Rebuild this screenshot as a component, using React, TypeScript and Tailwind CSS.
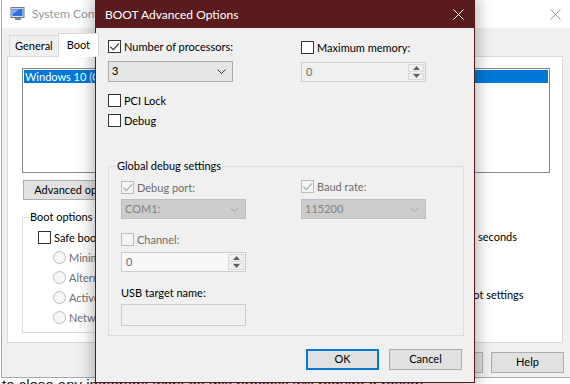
import clsx from 'clsx'

// ---- small win10-style controls ----

function CheckBox({ checked = false, disabled = false }: { checked?: boolean; disabled?: boolean }) {
  return (
    <span
      className={clsx(
        'flex h-[13px] w-[13px] shrink-0 items-center justify-center border',
        disabled ? 'border-[#bcbcbc] bg-[#f4f4f4]' : 'border-[#333333] bg-white'
      )}
    >
      {checked && (
        <svg width="11" height="11" viewBox="0 0 11 11">
          <path d="M1.3 5.6 L4.3 8.7 L10 2.4" fill="none" stroke={disabled ? '#a8a8a8' : '#333'} strokeWidth="1.1" />
        </svg>
      )}
    </span>
  )
}

function CheckRow({ label, checked, disabled, className }: { label: string; checked?: boolean; disabled?: boolean; className?: string }) {
  return (
    <div className={clsx('flex h-[13px] items-center gap-[3px] whitespace-nowrap', className)}>
      <CheckBox checked={checked} disabled={disabled} />
      <span className={clsx('leading-[13px]', disabled ? 'text-[#6d6d6d]' : 'text-black')}>{label}</span>
    </div>
  )
}

function Radio({ label, className }: { label: string; className?: string }) {
  return (
    <div className={clsx('flex h-[13px] items-center gap-[3px]', className)}>
      <span className="h-[13px] w-[13px] shrink-0 rounded-full border border-[#bcbcbc] bg-[#f7f7f7]" />
      <span className="leading-[13px] text-[#6d6d6d]">{label}</span>
    </div>
  )
}

function Chevron({ color }: { color: string }) {
  return (
    <svg width="9" height="5" viewBox="0 0 9 5">
      <path d="M0.5 0.5 L4.5 4.5 L8.5 0.5" fill="none" stroke={color} strokeWidth="1" />
    </svg>
  )
}

function Select({ value, disabled = false, className }: { value: string; disabled?: boolean; className?: string }) {
  return (
    <div
      className={clsx(
        'flex w-[125px] items-center justify-between border pl-[3px] pr-[6px]',
        disabled ? 'h-[20px] border-[#bfbfbf] bg-[#cccccc] text-[#838383]' : 'h-[21px] border-[#acacac] bg-[#e5e5e5] text-black',
        className
      )}
    >
      <span>{value}</span>
      <Chevron color={disabled ? '#a8a8a8' : '#333'} />
    </div>
  )
}

function Spin({ value, bg, className }: { value: string; bg: string; className?: string }) {
  return (
    <div className={clsx('flex h-[20px] w-[125px] items-stretch border border-[#cccccc]', bg, className)}>
      <span className="flex-1 pl-[4px] leading-[18px] text-[#6d6d6d]">{value}</span>
      <div className="flex w-[17px] flex-col gap-[1px] py-[1px] pr-[1px]">
        <div className="flex flex-1 items-center justify-center border border-[#dadada] bg-[#f0f0f0]">
          <svg width="7" height="4" viewBox="0 0 7 4"><path d="M0 4 L3.5 0 L7 4 Z" fill="#606060" /></svg>
        </div>
        <div className="flex flex-1 items-center justify-center border border-[#dadada] bg-[#f0f0f0]">
          <svg width="7" height="4" viewBox="0 0 7 4"><path d="M0 0 L3.5 4 L7 0 Z" fill="#606060" /></svg>
        </div>
      </div>
    </div>
  )
}

function Button({ label, primary = false }: { label: string; primary?: boolean }) {
  return (
    <div
      className={clsx(
        'flex h-[21px] w-[73px] items-center justify-center bg-[#e1e1e1]',
        primary ? 'border-2 border-[#0078d7]' : 'border border-[#adadad]'
      )}
    >
      {label}
    </div>
  )
}

function CloseX({ color }: { color: string }) {
  return (
    <svg width="11" height="11" viewBox="0 0 11 11">
      <path d="M0.5 0.5 L10.5 10.5 M10.5 0.5 L0.5 10.5" stroke={color} strokeWidth="1" />
    </svg>
  )
}

// ---- background msconfig window ----

function SystemConfig() {
  return (
    <div className="absolute left-[1px] top-0 flex h-[378px] w-[577px] flex-col border-b border-l border-[#aaaaaa] bg-[#f0f0f0]">
      {/* title */}
      <div className="flex h-[28px] items-center bg-white pl-[8px]">
        <svg width="16" height="14" viewBox="0 0 16 14">
          <rect x="1" y="0.5" width="13" height="10" fill="#cfd8e3" stroke="#6b7b8c" />
          <rect x="2.5" y="2" width="10" height="7" fill="#2f6fd6" />
          <path d="M3 2.5 L9 2.5 L3 7 Z" fill="#7fb2f0" />
          <rect x="5" y="11" width="6" height="2" fill="#7d8794" />
        </svg>
        <span className="ml-[6px] text-[12px] text-[#999999]">System Configuration</span>
        <div className="ml-auto flex h-full w-[46px] items-center justify-center">
          <CloseX color="#999999" />
        </div>
      </div>

      {/* tabs */}
      <div className="flex items-end pl-[7px] pt-[5px]">
        <div className="flex h-[21px] items-center border border-b-0 border-[#d9d9d9] bg-[#f0f0f0] px-[5px]">General</div>
        <div className="relative z-10 -mb-px ml-[-1px] flex h-[24px] items-center border border-b-0 border-[#d9d9d9] bg-white px-[8px]">Boot</div>
        <div className="flex h-[21px] items-center border border-b-0 border-[#d9d9d9] bg-[#f0f0f0] px-[5px]">Services</div>
      </div>

      {/* panel */}
      <div className="ml-[5px] flex h-[287px] w-[556px] flex-col border border-[#d9d9d9] bg-white pl-[14px] pt-[11px]">
        <div className="h-[105px] w-[528px] border border-[#828790] p-[1px]">
          <div className="h-[13px] bg-[#0078d7] pl-[1px] leading-[13px] text-white">Windows 10 (C:\Windows) : Current OS; Default OS</div>
        </div>

        <div className="ml-[1px] mt-[7px] flex h-[20px] w-[117px] items-center justify-center border border-[#adadad] bg-[#e1e1e1]">
          Advanced options...
        </div>

        <div className="mt-[10px] flex">
          <div className="relative mt-[7px] h-[116px] w-[366px] shrink-0 border border-[#dcdcdc] pl-[15px] pt-[13px]">
            <span className="absolute -top-[8px] left-[6px] bg-white px-[1px] leading-[14px]">Boot options</span>
            <CheckRow label="Safe boot" />
            <div className="pl-[15px]">
              <Radio label="Minimal" className="mt-[7px]" />
              <Radio label="Alternate shell" className="mt-[7px]" />
              <Radio label="Active Directory repair" className="mt-[7px]" />
              <Radio label="Network" className="mt-[7px]" />
            </div>
          </div>
          <div className="ml-[14px] flex w-[135px] shrink-0 flex-col">
            <span className="leading-[14px]">Timeout:</span>
            <div className="mt-[6px] flex h-[14px] items-center whitespace-nowrap">
              <span className="h-[20px] w-[62px] border border-[#7a7a7a] pl-[3px] leading-[18px]">30</span>
              <span className="ml-[14px]">seconds</span>
            </div>
            <div className="mt-[44px] flex items-start gap-[3px]">
              <CheckBox />
              <span className="leading-[14px]">Make all boot settings permanent</span>
            </div>
          </div>
        </div>
      </div>

      {/* buttons */}
      <div className="mt-[9px] flex justify-end gap-[8px] pr-[14px]">
        <Button label="OK" />
        <Button label="Cancel" />
        <Button label="Apply" />
        <Button label="Help" />
      </div>
    </div>
  )
}

// ---- the dialog ----

function AdvancedOptions() {
  return (
    <div className="absolute left-[95px] top-0 flex h-[383px] w-[380px] flex-col border border-[#5a1b1f] bg-[#f0f0f0] shadow-[0_0_14px_3px_rgba(0,0,0,0.28)]">
      <div className="flex h-[27px] shrink-0 items-center bg-[#5a1b1f] pl-[9px] text-[12px] text-white">
        <span>BOOT Advanced Options</span>
        <div className="ml-auto flex h-full w-[32px] items-center justify-center">
          <CloseX color="#ffffff" />
        </div>
      </div>

      <div className="flex flex-col px-[12px] pt-[12px]">
        <div className="flex">
          <div className="flex w-[193px] flex-col">
            <CheckRow label="Number of processors:" checked />
            <Select value="3" className="mt-[8px]" />
            <CheckRow label="PCI Lock" className="mt-[12px]" />
            <CheckRow label="Debug" className="mt-[7px]" />
          </div>
          <div className="flex flex-col pt-[1px]">
            <CheckRow label="Maximum memory:" />
            <Spin value="0" bg="bg-[#f0f0f0]" className="mt-[8px]" />
          </div>
        </div>

        <div className="relative mt-[39px] h-[170px] w-[356px] border border-[#dcdcdc] pl-[12px] pt-[14px]">
          <span className="absolute -top-[8px] left-[7px] bg-[#f0f0f0] px-[1px] leading-[14px]">Global debug settings</span>
          <div className="flex">
            <div className="flex w-[180px] flex-col">
              <CheckRow label="Debug port:" checked disabled />
              <Select value="COM1:" disabled className="mt-[5px]" />
              <CheckRow label="Channel:" disabled className="mt-[14px]" />
              <Spin value="0" bg="bg-[#f8f8f8]" className="mt-[6px]" />
              <span className="mt-[14px] leading-[14px]">USB target name:</span>
              <div className="mt-[4px] h-[22px] w-[125px] border border-[#cccccc] bg-[#f0f0f0]" />
            </div>
            <div className="flex flex-col">
              <CheckRow label="Baud rate:" checked disabled className="-mt-[1px]" />
              <Select value="115200" disabled className="mt-[6px]" />
            </div>
          </div>
        </div>

        <div className="mt-[13px] flex justify-end gap-[10px]">
          <Button label="OK" primary />
          <Button label="Cancel" />
        </div>
      </div>
    </div>
  )
}

export default function App() {
  return (
    <div className="relative h-[384px] w-[570px] overflow-hidden bg-white font-['Segoe_UI',Lato,sans-serif] text-[11px] text-black">
      <div className="absolute left-[2px] top-[375px] whitespace-nowrap font-['Liberation_Sans',sans-serif] text-[15px] leading-[20px] text-[#222]">
        to close any important work as this process will require a restart.
      </div>
      <SystemConfig />
      <AdvancedOptions />
    </div>
  )
}
